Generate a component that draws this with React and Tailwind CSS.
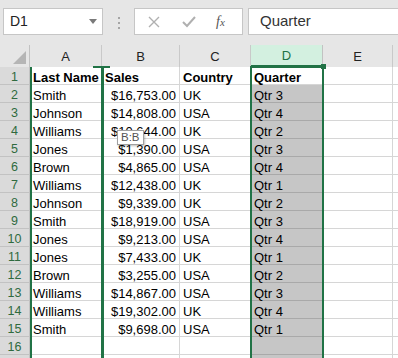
import React from 'react';

const rows = [
  ['Smith', '$16,753.00', 'UK', 'Qtr 3'],
  ['Johnson', '$14,808.00', 'USA', 'Qtr 4'],
  ['Williams', '$10,644.00', 'UK', 'Qtr 2'],
  ['Jones', '$1,390.00', 'USA', 'Qtr 3'],
  ['Brown', '$4,865.00', 'USA', 'Qtr 4'],
  ['Williams', '$12,438.00', 'UK', 'Qtr 1'],
  ['Johnson', '$9,339.00', 'UK', 'Qtr 2'],
  ['Smith', '$18,919.00', 'USA', 'Qtr 3'],
  ['Jones', '$9,213.00', 'USA', 'Qtr 4'],
  ['Jones', '$7,433.00', 'UK', 'Qtr 1'],
  ['Brown', '$3,255.00', 'USA', 'Qtr 2'],
  ['Williams', '$14,867.00', 'USA', 'Qtr 3'],
  ['Williams', '$19,302.00', 'UK', 'Qtr 4'],
  ['Smith', '$9,698.00', 'USA', 'Qtr 1'],
  ['', '', '', ''],
];

const cols = [
  { key: 'A', w: 'w-[72px]' },
  { key: 'B', w: 'w-[78px]' },
  { key: 'C', w: 'w-[71px]' },
  { key: 'D', w: 'w-[72px]' },
  { key: 'E', w: 'w-[70px]' },
  { key: 'F', w: 'w-[40px]' },
];

const font = "font-['Liberation_Sans',Arial,sans-serif]";

function RowHead({ n }) {
  return (
    <div className="w-[30px] h-[18px] shrink-0 flex items-center justify-center pt-[4px] bg-[#dadada] border-r border-b border-[#c2c2c2] text-[12.5px] text-[#2f6a3e]">
      {n}
    </div>
  );
}

function Cell({ w, children, align = 'left', bold, gray }) {
  return (
    <div
      className={`${w} h-[18px] shrink-0 flex items-center pt-[4px] px-[3px] border-r border-b whitespace-nowrap text-[13px] text-black ${
        align === 'right' ? 'justify-end' : 'justify-start'
      } ${bold ? 'font-bold' : ''} ${gray ? 'bg-[#c6c6c6] border-[#a9a9a9]' : 'border-[#d6d6d6]'}`}
    >
      {children}
    </div>
  );
}

export default function App() {
  return (
    <div className={`w-[398px] h-[358px] overflow-hidden bg-white ${font}`}>
      {/* formula bar */}
      <div className="h-[45px] bg-[#e6e6e6] flex items-start pt-[8px]">
        <div className="ml-[3px] w-[100px] h-[27px] bg-white border border-[#c6c6c6] flex items-center justify-between pl-[6px] pr-[5px]">
          <span className="text-[14px] text-[#222]">D1</span>
          <svg width="8" height="5" viewBox="0 0 8 5">
            <path d="M0 0 L8 0 L4 5 Z" fill="#7a7a7a" />
          </svg>
        </div>
        <div className="ml-[15px] mt-[9px] flex flex-col gap-[3px]">
          <div className="w-[2px] h-[2px] bg-[#a5a5a5]" />
          <div className="w-[2px] h-[2px] bg-[#a5a5a5]" />
          <div className="w-[2px] h-[2px] bg-[#a5a5a5]" />
        </div>
        <div className="ml-[14px] w-[109px] h-[27px] bg-white border border-[#c6c6c6] flex items-center">
          <svg className="ml-[13px]" width="12" height="12" viewBox="0 0 12 12">
            <path d="M1 1 L11 11 M11 1 L1 11" stroke="#b0b0b0" strokeWidth="1.4" fill="none" />
          </svg>
          <svg className="ml-[22px]" width="14" height="12" viewBox="0 0 14 12">
            <path d="M1 6 L5 10 L13 1" stroke="#b0b0b0" strokeWidth="2" fill="none" />
          </svg>
          <span className="ml-[20px] font-['Liberation_Serif',serif] italic text-[14px] text-[#555] leading-none">
            f<span className="text-[11px]">x</span>
          </span>
        </div>
        <div className="ml-[5px] flex-1 h-[27px] bg-white border border-[#c6c6c6] border-r-0 flex items-center pl-[11px]">
          <span className="text-[15px] text-[#333]">Quarter</span>
        </div>
      </div>

      {/* column headers */}
      <div className="flex h-[22px] bg-[#e6e6e6]">
        <div className="w-[30px] shrink-0 border-r border-[#c2c2c2] relative">
          <svg className="absolute right-[3px] bottom-[3px]" width="13" height="13" viewBox="0 0 13 13">
            <path d="M13 0 L13 13 L0 13 Z" fill="#b5b5b5" />
          </svg>
        </div>
        {cols.map((c) => (
          <div
            key={c.key}
            className={`${c.w} shrink-0 flex items-center justify-center pt-[2px] border-r text-[13px] ${
              c.key === 'D'
                ? 'bg-[#d3f0e0] border-[#c2c2c2] border-b-2 border-b-[#217346] text-[#217346]'
                : 'border-[#c9c9c9] text-[#222]'
            }`}
          >
            {c.key}
          </div>
        ))}
      </div>

      {/* grid */}
      <div className="relative">
        <div className="flex">
          <RowHead n={1} />
          <Cell w="w-[72px]" bold>Last Name</Cell>
          <Cell w="w-[78px]" bold>Sales</Cell>
          <Cell w="w-[71px]" bold>Country</Cell>
          <Cell w="w-[72px]" bold>Quarter</Cell>
          <Cell w="w-[70px]" />
          <Cell w="w-[40px]" />
        </div>
        {rows.map((r, i) => (
          <div key={i} className="flex">
            <RowHead n={i + 2} />
            <Cell w="w-[72px]">{r[0]}</Cell>
            <Cell w="w-[78px]" align="right">{r[1]}</Cell>
            <Cell w="w-[71px]">{r[2]}</Cell>
            <Cell w="w-[72px]" gray>{r[3]}</Cell>
            <Cell w="w-[70px]" />
            <Cell w="w-[40px]" />
          </div>
        ))}
        <div className="flex">
          <RowHead n="" />
          <Cell w="w-[72px]" />
          <Cell w="w-[78px]" />
          <Cell w="w-[71px]" />
          <Cell w="w-[72px]" gray />
          <Cell w="w-[70px]" />
          <Cell w="w-[40px]" />
        </div>

        {/* drag outline of column A */}
        <div className="absolute left-[30px] top-0 h-[300px] w-[2px] bg-[#217346]" />
        <div className="absolute left-[101px] top-0 h-[300px] w-[3px] bg-[#217346]" />
        <div className="absolute left-[93px] top-[-1px] w-[17px] h-[2px] bg-[#217346]" />

        {/* selection D */}
        <div className="absolute left-[250px] top-[-1px] w-[74px] h-[300px] border-2 border-[#217346]" />
        <div className="absolute left-[321px] top-[-3px] w-[5px] h-[5px] bg-[#217346]" />

        {/* drag tooltip */}
        <div className="absolute left-[117px] top-[63px] h-[15px] px-[3px] bg-white border border-[#a0a0a0] shadow-[1px_1px_2px_rgba(0,0,0,0.25)] flex items-center text-[11.5px] text-[#555] leading-none">
          B:B
        </div>
      </div>
    </div>
  );
}
